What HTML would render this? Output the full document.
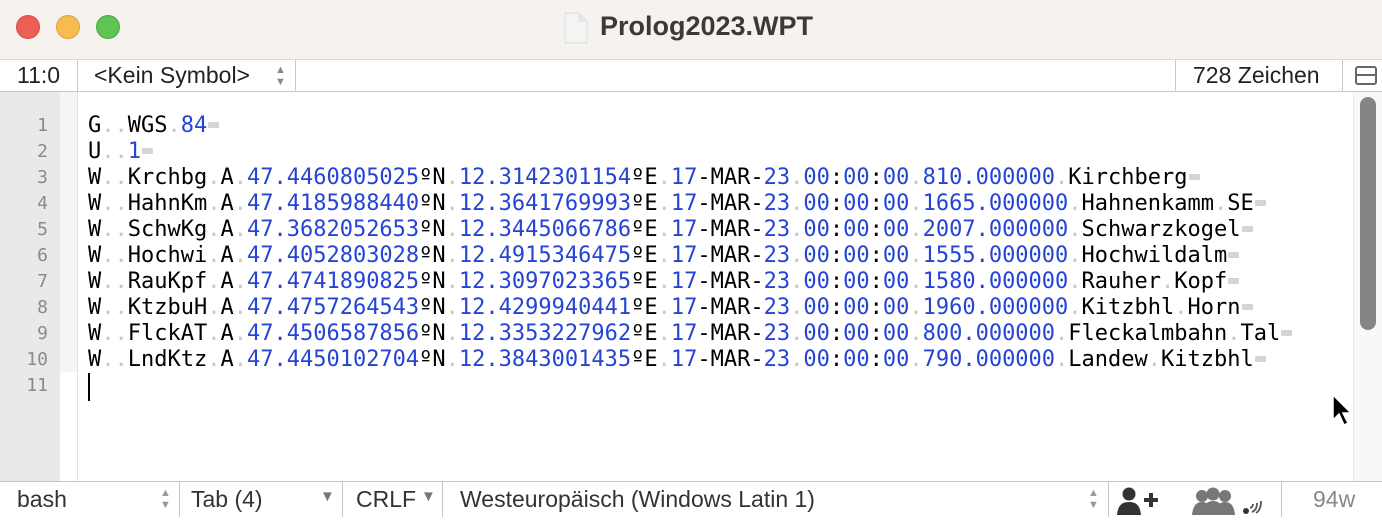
<!DOCTYPE html>
<html><head><meta charset="utf-8"><style>
*{margin:0;padding:0;box-sizing:border-box}
body{width:1382px;height:516px;overflow:hidden;background:#fff;font-family:"Liberation Sans",sans-serif;position:relative}
.a{position:absolute}
#title{left:0;top:0;width:1382px;height:60px;background:#f6f3ef;border-bottom:1px solid #dcdad7}
.tl{width:24px;height:24px;border-radius:50%;top:15px}
#tool{left:0;top:60px;width:1382px;height:32px;background:#fff;border-bottom:1px solid #c8c8c8;font-size:23px;color:#222}
.sep{position:absolute;top:0;width:1px;height:32px;background:#c8c8c8}
#gut{left:0;top:92px;width:60px;height:389px;background:#e9e9e9}
#gut2{left:60px;top:92px;width:17px;height:280px;background:#f5f5f5}
#gl{left:77px;top:92px;width:1px;height:389px;background:#e2e2e2}
.ln{position:absolute;left:0;width:48px;text-align:right;font-family:"DejaVu Sans Mono",monospace;font-size:18px;color:#8a8a8a}
#code{left:88px;top:113px;font-family:"DejaVu Sans Mono",monospace;font-size:22px;line-height:26px;color:#000;white-space:pre}
.b{color:#2544d6}.d{color:#c8c8c8}
.e{display:inline-block;width:11px;height:6px;background:#d4d4d4;border-radius:1px;vertical-align:4px;margin-left:1px}
#sb{left:1353px;top:92px;width:29px;height:389px;background:#f8f8f8;border-left:1px solid #e6e6e6}
#thumb{left:1360px;top:97px;width:16px;height:233px;background:#858585;border-radius:8px}
#stat{left:0;top:481px;width:1382px;height:35px;background:#fff;border-top:1px solid #c4c4c4;font-size:23px;color:#333}
.ss{position:absolute;top:0;width:1px;height:35px;background:#c4c4c4}
</style></head><body>
<div id="title" class="a">
<div class="a tl" style="left:16px;background:#ec5f56;border:1px solid #d64b43"></div>
<div class="a tl" style="left:56px;background:#f5bd4f;border:1px solid #dba13a"></div>
<div class="a tl" style="left:96px;background:#5fc454;border:1px solid #4aa83f"></div>
<svg class="a" style="left:563px;top:12px" width="26" height="32"><path d="M2 1H16L24 9V31H2Z" fill="#f4f4f4" stroke="#ddd"/><path d="M16 1V9H24" fill="#e6e6e6" stroke="#ddd"/></svg>
<div class="a" style="left:600px;top:11px;font-size:27px;font-weight:bold;color:#3c3a38">Prolog2023.WPT</div>
</div>
<div id="tool" class="a">
<div class="a" style="left:17px;top:2px">11:0</div>
<div class="sep" style="left:77px"></div>
<div class="a" style="left:94px;top:2px">&lt;Kein Symbol&gt;</div>
<div class="a" style="left:275px;top:4px;font-size:11px;color:#888;line-height:12px">▲<br>▼</div>
<div class="sep" style="left:295px"></div>
<div class="sep" style="left:1175px"></div>
<div class="a" style="left:1193px;top:2px">728 Zeichen</div>
<div class="sep" style="left:1342px"></div>
<div class="a" style="left:1355px;top:6px;width:22px;height:19px;border:2px solid #666;border-radius:3px"><div style="margin-top:6px;border-top:2px solid #666"></div></div>
</div>
<div id="gut" class="a"></div><div id="gut2" class="a"></div><div id="gl" class="a"></div>
<div class="a" style="left:0;top:113px">
<div class="ln" style="top:2px">1</div><div class="ln" style="top:28px">2</div><div class="ln" style="top:54px">3</div><div class="ln" style="top:80px">4</div><div class="ln" style="top:106px">5</div><div class="ln" style="top:132px">6</div><div class="ln" style="top:158px">7</div><div class="ln" style="top:184px">8</div><div class="ln" style="top:210px">9</div><div class="ln" style="top:236px">10</div><div class="ln" style="top:262px">11</div>
</div>
<div id="code" class="a">G<span class="d">..</span>WGS<span class="d">.</span><span class="b">84</span><span class="e"></span>
U<span class="d">..</span><span class="b">1</span><span class="e"></span>
W<span class="d">..</span>Krchbg<span class="d">.</span>A<span class="d">.</span><span class="b">47.4460805025</span>ºN<span class="d">.</span><span class="b">12.3142301154</span>ºE<span class="d">.</span><span class="b">17</span>-MAR-<span class="b">23</span><span class="d">.</span><span class="b">00</span>:<span class="b">00</span>:<span class="b">00</span><span class="d">.</span><span class="b">810.000000</span><span class="d">.</span>Kirchberg<span class="e"></span>
W<span class="d">..</span>HahnKm<span class="d">.</span>A<span class="d">.</span><span class="b">47.4185988440</span>ºN<span class="d">.</span><span class="b">12.3641769993</span>ºE<span class="d">.</span><span class="b">17</span>-MAR-<span class="b">23</span><span class="d">.</span><span class="b">00</span>:<span class="b">00</span>:<span class="b">00</span><span class="d">.</span><span class="b">1665.000000</span><span class="d">.</span>Hahnenkamm<span class="d">.</span>SE<span class="e"></span>
W<span class="d">..</span>SchwKg<span class="d">.</span>A<span class="d">.</span><span class="b">47.3682052653</span>ºN<span class="d">.</span><span class="b">12.3445066786</span>ºE<span class="d">.</span><span class="b">17</span>-MAR-<span class="b">23</span><span class="d">.</span><span class="b">00</span>:<span class="b">00</span>:<span class="b">00</span><span class="d">.</span><span class="b">2007.000000</span><span class="d">.</span>Schwarzkogel<span class="e"></span>
W<span class="d">..</span>Hochwi<span class="d">.</span>A<span class="d">.</span><span class="b">47.4052803028</span>ºN<span class="d">.</span><span class="b">12.4915346475</span>ºE<span class="d">.</span><span class="b">17</span>-MAR-<span class="b">23</span><span class="d">.</span><span class="b">00</span>:<span class="b">00</span>:<span class="b">00</span><span class="d">.</span><span class="b">1555.000000</span><span class="d">.</span>Hochwildalm<span class="e"></span>
W<span class="d">..</span>RauKpf<span class="d">.</span>A<span class="d">.</span><span class="b">47.4741890825</span>ºN<span class="d">.</span><span class="b">12.3097023365</span>ºE<span class="d">.</span><span class="b">17</span>-MAR-<span class="b">23</span><span class="d">.</span><span class="b">00</span>:<span class="b">00</span>:<span class="b">00</span><span class="d">.</span><span class="b">1580.000000</span><span class="d">.</span>Rauher<span class="d">.</span>Kopf<span class="e"></span>
W<span class="d">..</span>KtzbuH<span class="d">.</span>A<span class="d">.</span><span class="b">47.4757264543</span>ºN<span class="d">.</span><span class="b">12.4299940441</span>ºE<span class="d">.</span><span class="b">17</span>-MAR-<span class="b">23</span><span class="d">.</span><span class="b">00</span>:<span class="b">00</span>:<span class="b">00</span><span class="d">.</span><span class="b">1960.000000</span><span class="d">.</span>Kitzbhl<span class="d">.</span>Horn<span class="e"></span>
W<span class="d">..</span>FlckAT<span class="d">.</span>A<span class="d">.</span><span class="b">47.4506587856</span>ºN<span class="d">.</span><span class="b">12.3353227962</span>ºE<span class="d">.</span><span class="b">17</span>-MAR-<span class="b">23</span><span class="d">.</span><span class="b">00</span>:<span class="b">00</span>:<span class="b">00</span><span class="d">.</span><span class="b">800.000000</span><span class="d">.</span>Fleckalmbahn<span class="d">.</span>Tal<span class="e"></span>
W<span class="d">..</span>LndKtz<span class="d">.</span>A<span class="d">.</span><span class="b">47.4450102704</span>ºN<span class="d">.</span><span class="b">12.3843001435</span>ºE<span class="d">.</span><span class="b">17</span>-MAR-<span class="b">23</span><span class="d">.</span><span class="b">00</span>:<span class="b">00</span>:<span class="b">00</span><span class="d">.</span><span class="b">790.000000</span><span class="d">.</span>Landew<span class="d">.</span>Kitzbhl<span class="e"></span>
</div>
<div class="a" style="left:88px;top:373px;width:2px;height:28px;background:#000"></div>
<svg class="a" style="left:1330px;top:393px" width="24" height="36"><path d="M3 2V27L9 21L14 32L18 30L13 20H21Z" fill="#000" stroke="#fff" stroke-width="1.5"/></svg>
<div id="sb" class="a"></div><div id="thumb" class="a"></div>
<div id="stat" class="a">
<div class="a" style="left:17px;top:4px">bash</div>
<div class="a" style="left:160px;top:5px;font-size:11px;color:#999;line-height:12px">▲<br>▼</div>
<div class="ss" style="left:179px"></div>
<div class="a" style="left:191px;top:4px">Tab (4)</div>
<div class="a" style="left:320px;top:6px;font-size:15px;color:#777">▼</div>
<div class="ss" style="left:342px"></div>
<div class="a" style="left:356px;top:4px">CRLF</div>
<div class="a" style="left:421px;top:6px;font-size:15px;color:#777">▼</div>
<div class="ss" style="left:442px"></div>
<div class="a" style="left:460px;top:4px">Westeuropäisch (Windows Latin 1)</div>
<div class="a" style="left:1088px;top:5px;font-size:11px;color:#999;line-height:12px">▲<br>▼</div>
<div class="ss" style="left:1108px"></div>
<svg class="a" style="left:1116px;top:4px" width="50" height="30"><circle cx="13" cy="8" r="6.5" fill="#333"/><path d="M1 29C2 19 6 16 13 16S24 19 25 29Z" fill="#333"/><path d="M28 14H42M35 7V21" stroke="#333" stroke-width="4"/></svg>
<div class="a" style="left:1192px;top:4px"><svg width="70" height="30"><g fill="#777"><circle cx="10" cy="10" r="6"/><path d="M0 29C1 20 4 16 10 16S19 20 20 29Z"/><circle cx="33" cy="10" r="6"/><path d="M23 29C24 20 27 16 33 16S42 20 43 29Z"/><circle cx="21" cy="8" r="6.5"/><path d="M10 29C11 19 15 15 21 15S31 19 32 29Z"/></g><circle cx="54" cy="25" r="3" fill="#333"/><path d="M58 22Q61 21 61 18M60 26Q65 24 65 17M64 27Q69 24 69 15" stroke="#555" stroke-width="1.8" fill="none"/></svg></div>
<div class="ss" style="left:1281px"></div>
<div class="a" style="left:1313px;top:4px;color:#888">94w</div>
</div>
</body></html>
